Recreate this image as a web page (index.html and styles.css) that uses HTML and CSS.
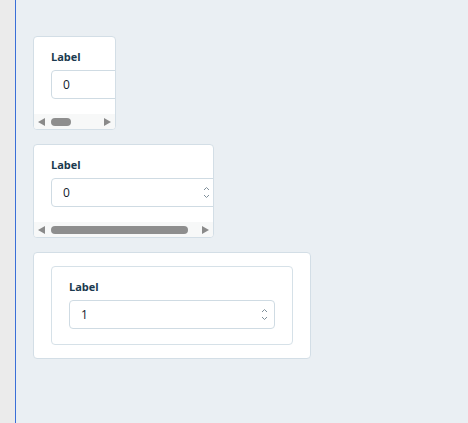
FILE: index.html
```html
<!DOCTYPE html>
<html lang="en">
<head>
<meta charset="utf-8">
<title>Number fields</title>
<link rel="stylesheet" href="styles.css">
</head>
<body>
<div class="app">
  <aside class="rail"></aside>
  <main class="stage">
    <section class="panel scroll narrow">
      <div class="scroll-body">
        <label class="field">
          <span class="field-label">Label</span>
          <span class="number">
            <input class="number-input" type="text" value="0">
            <svg class="spin" width="7" height="13" viewBox="0 0 7 13"><path d="M1 4 L3.5 1.5 L6 4 M1 9 L3.5 11.5 L6 9"/></svg>
          </span>
        </label>
      </div>
      <div class="scrollbar">
        <span class="sb-btn"><i class="tri left"></i></span>
        <span class="sb-track"><span class="sb-thumb" style="width: 20px"></span></span>
        <span class="sb-btn"><i class="tri right"></i></span>
      </div>
    </section>
    <section class="panel scroll medium">
      <div class="scroll-body">
        <label class="field">
          <span class="field-label">Label</span>
          <span class="number">
            <input class="number-input" type="text" value="0">
            <svg class="spin" width="7" height="13" viewBox="0 0 7 13"><path d="M1 4 L3.5 1.5 L6 4 M1 9 L3.5 11.5 L6 9"/></svg>
          </span>
        </label>
      </div>
      <div class="scrollbar">
        <span class="sb-btn"><i class="tri left"></i></span>
        <span class="sb-track"><span class="sb-thumb" style="width: 137px"></span></span>
        <span class="sb-btn"><i class="tri right"></i></span>
      </div>
    </section>
    <section class="card wide">
      <div class="panel inner">
        <label class="field">
          <span class="field-label">Label</span>
          <span class="number full">
            <input class="number-input" type="text" value="1">
            <svg class="spin" width="7" height="13" viewBox="0 0 7 13"><path d="M1 4 L3.5 1.5 L6 4 M1 9 L3.5 11.5 L6 9"/></svg>
          </span>
        </label>
      </div>
    </section>
  </main>
</div>
</body>
</html>
```
FILE: styles.css
```css
* { box-sizing: border-box; }

html, body {
  margin: 0;
  height: 100%;
}

body {
  font-family: "Open Sans", sans-serif;
  background: #eaeff3;
}

.app {
  display: flex;
  min-height: 100%;
}

.rail {
  width: 16px;
  flex: none;
  background: #ebebeb;
  border-right: 1px solid #3a6fd8;
}

.stage {
  flex: 1;
  display: flex;
  flex-direction: column;
  align-items: flex-start;
  gap: 14px;
  padding: 36px 17px;
}

/* bordered white box */
.panel {
  background: #fff;
  border: 1px solid #d3dee6;
  border-radius: 4px;
  padding: 12px 17px 15px;
}

/* horizontally scrolling panel: body clipped, bar drawn underneath */
.scroll {
  padding: 0;
  overflow: hidden;
  display: flex;
  flex-direction: column;
}

.scroll-body {
  padding: 12px 17px 15px;
  overflow: hidden;
}

.narrow { width: 83px; }
.medium { width: 181px; }

.scrollbar {
  height: 15px;
  display: flex;
  background: #f7f8f8;
}

.sb-btn {
  width: 15px;
  flex: none;
  display: flex;
  align-items: center;
  justify-content: center;
}

.tri {
  width: 0;
  height: 0;
  border-top: 4px solid transparent;
  border-bottom: 4px solid transparent;
}

.tri.left { border-right: 7px solid #8a8a8a; }
.tri.right { border-left: 7px solid #8a8a8a; }

.sb-track {
  flex: 1;
  display: flex;
  align-items: center;
  padding: 0 2px;
}

.sb-thumb {
  height: 8px;
  border-radius: 4px;
  background: #8e8e8e;
}

.card {
  background: #fff;
  border: 1px solid #d3dee6;
  border-radius: 4px;
  padding: 13px 17px;
}

.wide { width: 278px; }

.panel.inner {
  border-color: #d6e1e8;
}

.field {
  display: flex;
  flex-direction: column;
  gap: 5px;
}

.field-label {
  font-size: 11px;
  line-height: 16px;
  font-weight: 700;
  color: #1b3a4f;
}

.number {
  position: relative;
  display: block;
  width: 166px;
  height: 29px;
  flex: none;
}

.number.full {
  width: 206px;
}

.number-input {
  display: block;
  width: 100%;
  height: 100%;
  margin: 0;
  padding: 0 22px 0 11px;
  border: 1px solid #cfdbe3;
  border-radius: 4px;
  background: #fff;
  font-family: "Open Sans", sans-serif;
  font-size: 12px;
  color: #13202c;
  outline: none;
}

/* up/down stepper glyph sitting over the right end of the field */
.spin {
  position: absolute;
  right: 7px;
  top: 8px;
  fill: none;
  stroke: #7f8f9a;
  stroke-width: 1;
}
```
